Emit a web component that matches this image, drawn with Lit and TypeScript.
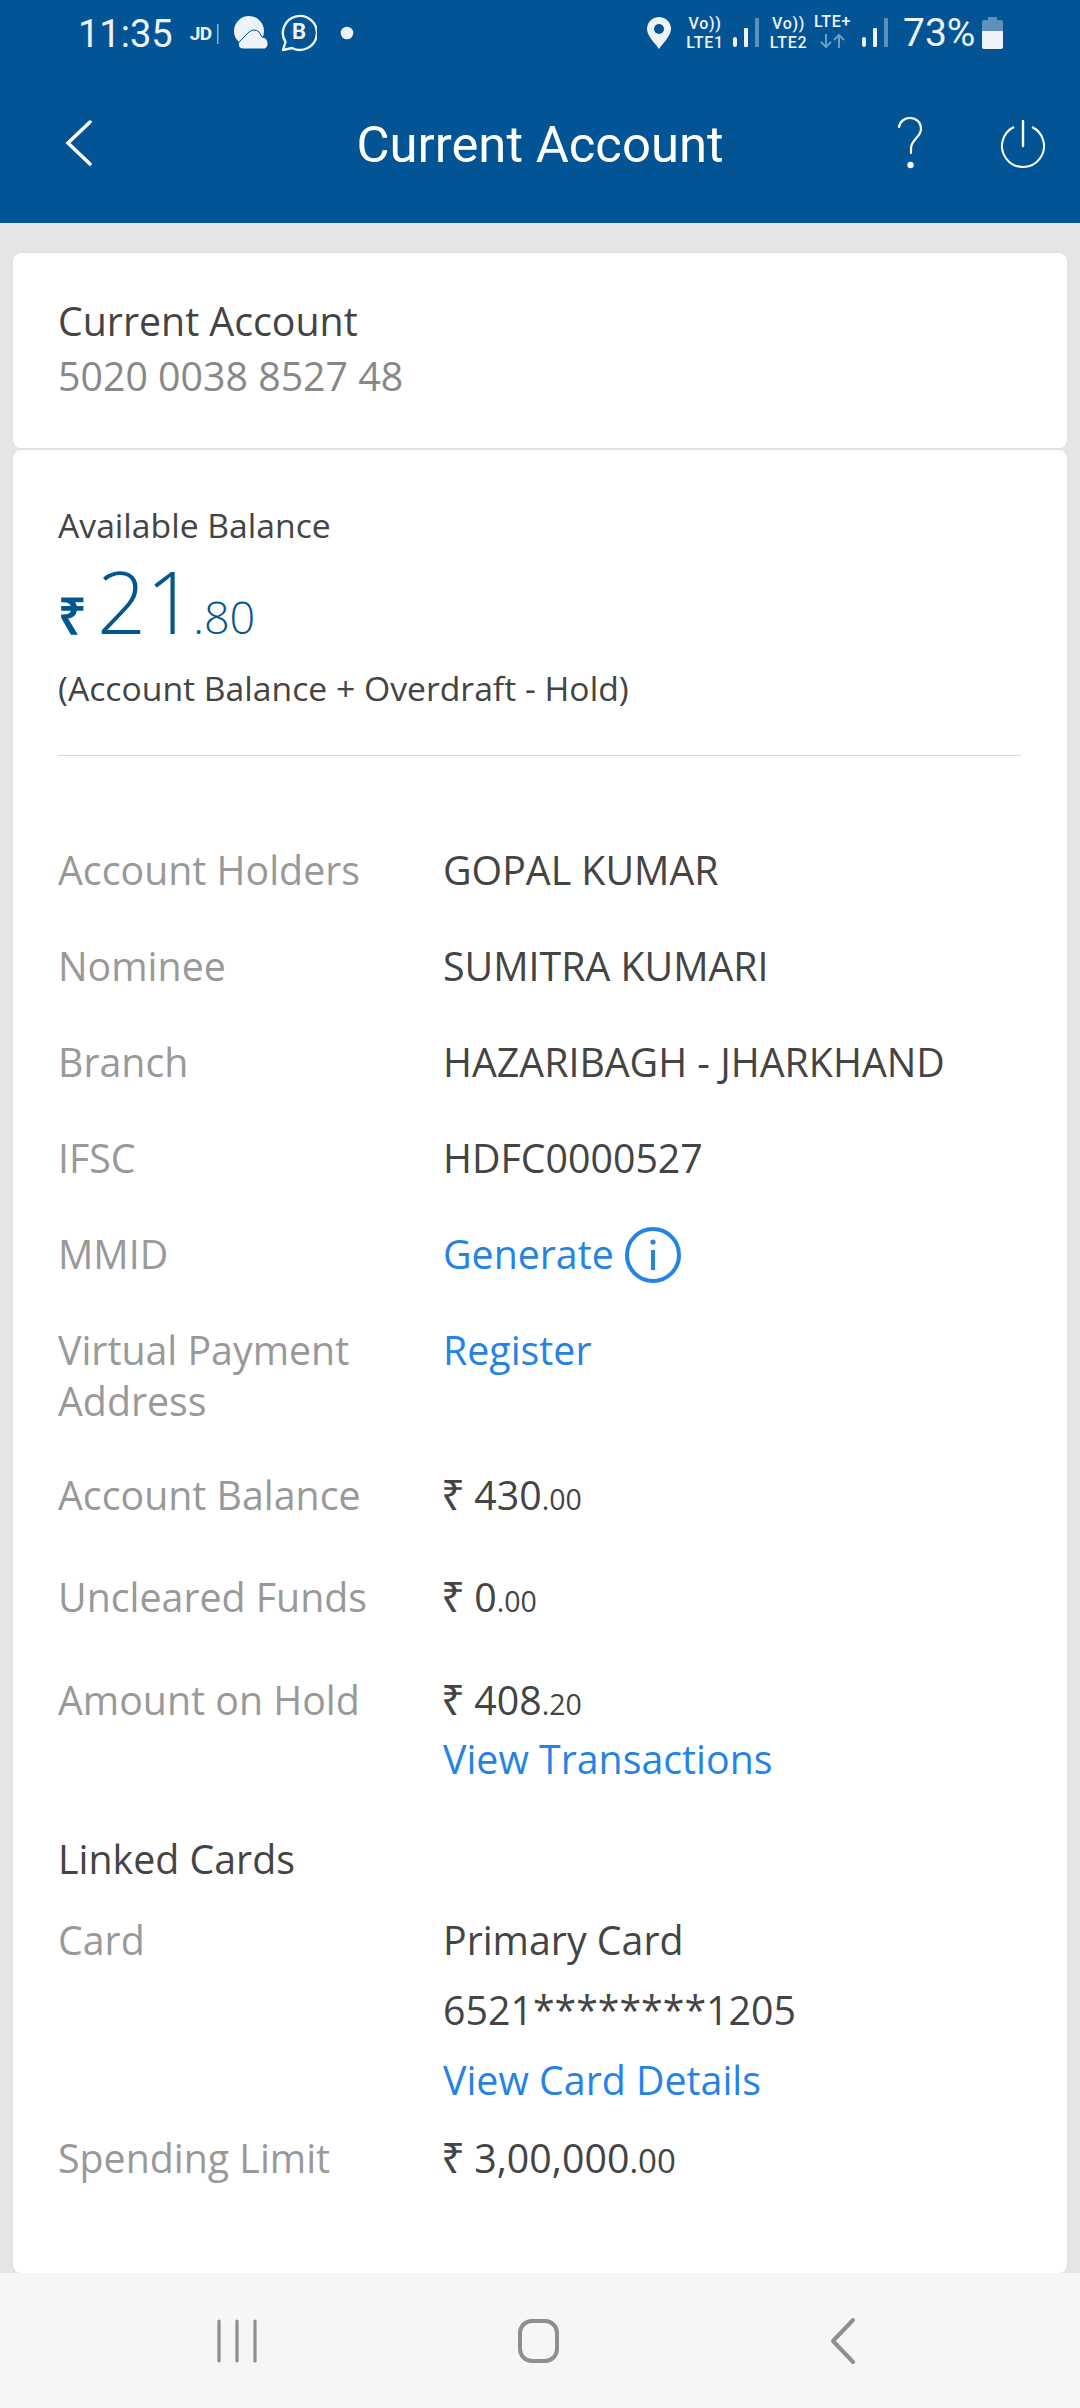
import { LitElement, html, css, svg } from "lit";
import { customElement } from "lit/decorators.js";

const signal = svg`
  <rect x="0" y="19" width="4" height="10" rx="2" fill="#eef3fa"/>
  <rect x="11" y="10" width="4" height="19" rx="1" fill="#eef3fa"/>
  <rect x="22" y="0" width="4" height="29" rx="1" fill="#5f8fbc"/>`;

const money = (whole: string, dec: string, big = false) => html`<span class="money"><span class="rs">₹</span> ${whole}<small class=${big ? "big" : ""}>.${dec}</small></span>`;

@customElement("app-root")
export class AppRoot extends LitElement {
  static styles = css`
    :host { display: block; width: 1080px; height: 2408px; overflow: hidden; font-family: "Open Sans", sans-serif; }
    .page { height: 2408px; display: flex; flex-direction: column; background: #e5e5e5; }
    .top { background: #035494; height: 223px; flex: none; color: #fff; font-family: Roboto, sans-serif; display: flex; flex-direction: column; }
    .status { height: 65px; flex: none; display: flex; align-items: center; padding: 0 0 0 78px; position: relative; color: #eef3fa; }
    .time { font-size: 38px; line-height: 1; margin-top: 2px; }
    .jd { font-size: 19px; font-weight: 700; margin-left: 17px; margin-top: 2px; letter-spacing: -0.5px; }
    .status svg { display: block; flex: none; }
    .right { position: absolute; left: 647px; top: 0; height: 65px; display: flex; align-items: center; }
    .st { font-size: 16px; line-height: 19px; text-align: center; font-weight: 500; white-space: nowrap; letter-spacing: 0.7px; }
    .st svg { margin: 3px auto 0; }
    .pct { font-size: 39px; line-height: 1; margin-top: 2px; }
    .bar { flex: 1; display: flex; align-items: center; position: relative; justify-content: center; }
    .title { font-size: 50.800px; line-height: 60px; margin-top: 2px; }
    .back { position: absolute; left: 65px; top: 55px; }
    .help { position: absolute; left: 897px; top: 51px; }
    .power { position: absolute; left: 1000px; top: 55px; }
    .body { flex: 1; overflow: hidden; padding: 30px 13px 0; display: flex; flex-direction: column; gap: 2px; min-height: 0; }
    .card { background: #fff; border-radius: 8px; box-shadow: 0 0 2px #d4d4d4; }
    .head { height: 195px; flex: none; padding: 41px 45px 0; box-sizing: border-box; font-size: 39.300px; line-height: 55px; color: #444; }
    .head .num { color: #888; }
    .main { flex: 1; padding: 52px 46px 0 45px; }
    .avail { font-size: 33.700px; line-height: 46px; color: #444; }
    .bal { color: #03568f; font-size: 86px; line-height: 110px; font-weight: 300; display: flex; align-items: baseline; margin-top: -2px; }
    .bal .rs { font-size: 50px; font-weight: 600; margin-right: 10px; }
    .bal small { font-size: 45px; margin-left: -2px; }
    .calc { font-size: 33.700px; line-height: 46px; color: #444; margin-top: -7px; }
    hr { border: 0; height: 1px; background: #d8d8d8; margin: 44px 0 0; }
    .rows { margin-top: 89px; }
    .row { display: grid; grid-template-columns: 385px 1fr; font-size: 39.300px; line-height: 51px; color: #444; margin-bottom: 45px; }
    .row .l { color: #999; }
    .row.m { margin-bottom: 47.500px; }
    .row.tight { margin-bottom: 44.500px; }
    .link { color: #2583e8; }
    .gen { display: flex; align-items: center; gap: 11px; }
    .money .rs { font-size: 42px; font-weight: 500; line-height: 1; margin-left: -2px; margin-right: -1px; }
    .money small { font-size: 28.500px; }
    .money small.big { font-size: 33px; }
    .linked { font-size: 39.300px; line-height: 51px; color: #444; margin-bottom: 30px; }
    .stack { display: flex; flex-direction: column; gap: 19px; }
    .nav { height: 135px; flex: none; background: #f6f6f6; position: relative; }
    .nav svg { position: absolute; top: 45px; }
  `;

  render() {
    return html`<div class="page">
      <div class="top">
        <div class="status">
          <span class="time">11:35</span>
          <span class="jd">JD</span>
          <svg style="margin-left:5px;margin-top:2px" width="2" height="20" viewBox="0 0 2 20"><rect width="1.500" height="20" fill="#8fb2d3"/></svg>
          <svg style="margin-left:14px" width="36" height="34" viewBox="0 0 36 34">
            <circle cx="16" cy="15" r="15" fill="#eef3fa"/>
            <path d="M10 33a4.500 4.500 0 0 1-3-8L16 16q5-4 10 0l3 5a6.500 6.500 0 0 1 3 12z" fill="#eef3fa" stroke="#035494" stroke-width="1"/>
          </svg>
          <svg style="margin-left:11px" width="37" height="38" viewBox="0 0 37 38">
            <path d="M3 36l2.500-8A17 17 0 1 1 12 34z" fill="none" stroke="#eef3fa" stroke-width="2.400" stroke-linejoin="round"/>
            <text x="19" y="25" text-anchor="middle" font-family="Roboto" font-size="22" font-weight="700" fill="#eef3fa">B</text>
          </svg>
          <svg style="margin-left:23px" width="14" height="14" viewBox="0 0 14 14"><circle cx="7" cy="7" r="6.300" fill="#eef3fa"/></svg>
          <div class="right">
            <svg width="24" height="32" viewBox="0 0 24 32"><path d="M12 0a12 12 0 0 1 12 12c0 7-8 14-12 20C8 26 0 19 0 12A12 12 0 0 1 12 0z" fill="#eef3fa"/><circle cx="12" cy="12" r="5" fill="#035494"/></svg>
            <div class="st" style="margin-left:15px;width:38px"><div>Vo))</div><div>LTE1</div></div>
            <svg style="margin-left:9px" width="26" height="29" viewBox="0 0 26 29">${signal}</svg>
            <div class="st" style="margin-left:10px;width:39px"><div>Vo))</div><div>LTE2</div></div>
            <div class="st" style="margin-left:5px;width:39px"><div style="margin-top:-5px">LTE+</div>
              <svg width="25" height="14" viewBox="0 0 25 14"><path d="M6 0v13M1 8l5 5 5-5M19 14V1M14 6l5-5 5 5" fill="none" stroke="#6f9bc4" stroke-width="2"/></svg></div>
            <svg style="margin-left:10px" width="26" height="29" viewBox="0 0 26 29">${signal}</svg>
            <span class="pct" style="margin-left:15px">73%</span>
            <svg style="margin-left:7px" width="21" height="32" viewBox="0 0 21 32"><path d="M6 0h9v3h4a2 2 0 0 1 2 2v9H0V5a2 2 0 0 1 2-2h4z" fill="#5f8fbc"/><path d="M0 14h21v16a2 2 0 0 1-2 2H2a2 2 0 0 1-2-2z" fill="#eef3fa"/></svg>
          </div>
        </div>
        <div class="bar">
          <svg class="back" width="28" height="46" viewBox="0 0 28 46"><path d="M25 2 3 23l22 21" fill="none" stroke="#fff" stroke-width="3.500" stroke-linecap="round"/></svg>
          <span class="title">Current Account</span>
          <svg class="help" width="26" height="54" viewBox="0 0 26 54"><path d="M2 11C3 5 8 2 13 2c6 0 11 4 11 11 0 8-10 11-10 19v5" fill="none" stroke="#fff" stroke-width="2.200" stroke-linecap="round"/><circle cx="13.500" cy="49" r="3.200" fill="#fff"/></svg>
          <svg class="power" width="46" height="48" viewBox="0 0 46 48"><path d="M14 7a21 21 0 1 0 18 0" fill="none" stroke="#fff" stroke-width="2"/><path d="M23 1v25" stroke="#fff" stroke-width="2.400" stroke-linecap="round"/></svg>
        </div>
      </div>
      <div class="body">
        <div class="card head">
          <div>Current Account</div>
          <div class="num">5020 0038 8527 48</div>
        </div>
        <div class="card main">
          <div class="avail">Available Balance</div>
          <div class="bal"><span class="rs">₹</span>21<small>.80</small></div>
          <div class="calc">(Account Balance + Overdraft - Hold)</div>
          <hr />
          <div class="rows">
            <div class="row"><span class="l">Account Holders</span><span>GOPAL KUMAR</span></div>
            <div class="row"><span class="l">Nominee</span><span>SUMITRA KUMARI</span></div>
            <div class="row"><span class="l">Branch</span><span>HAZARIBAGH - JHARKHAND</span></div>
            <div class="row"><span class="l">IFSC</span><span>HDFC0000527</span></div>
            <div class="row tight"><span class="l">MMID</span><span class="gen"><span class="link">Generate</span>
              <svg width="56" height="56" viewBox="0 0 56 56" style="margin:-3px 0"><circle cx="28" cy="28" r="26" fill="none" stroke="#2583e8" stroke-width="4"/><circle cx="28" cy="15" r="2.600" fill="#2583e8"/><path d="M28 23v20" stroke="#2583e8" stroke-width="4"/></svg></span></div>
            <div class="row" style="margin-bottom:43px"><span class="l">Virtual Payment<br />Address</span><span class="link">Register</span></div>
            <div class="row m"><span class="l">Account Balance</span>${money("430", "00")}</div>
            <div class="row m"><span class="l">Uncleared Funds</span>${money("0", "00")}</div>
            <div class="row" style="margin-bottom:49px"><span class="l">Amount on Hold</span><span class="stack" style="gap:4px">${money("408", "20")}<span class="link">View Transactions</span></span></div>
            <div class="linked">Linked Cards</div>
            <div class="row" style="margin-bottom:27px"><span class="l">Card</span><span class="stack"><span>Primary Card</span><span>6521********1205</span><span class="link">View Card Details</span></span></div>
            <div class="row"><span class="l">Spending Limit</span>${money("3,00,000", "00", true)}</div>
          </div>
        </div>
      </div>
      <div class="nav">
        <svg style="left:216px" width="42" height="46" viewBox="0 0 42 46"><path d="M3 3v40M21 3v40M39 3v40" stroke="#8f8f8f" stroke-width="3.200" stroke-linecap="round"/></svg>
        <svg style="left:516px" width="45" height="46" viewBox="0 0 45 46"><rect x="4" y="3" width="37" height="40" rx="12" fill="none" stroke="#8f8f8f" stroke-width="4"/></svg>
        <svg style="left:829px;top:44px" width="28" height="48" viewBox="0 0 28 48"><path d="M24 3 4 24l20 21" fill="none" stroke="#8f8f8f" stroke-width="4" stroke-linecap="round" stroke-linejoin="round"/></svg>
      </div>
    </div>`;
  }
}
